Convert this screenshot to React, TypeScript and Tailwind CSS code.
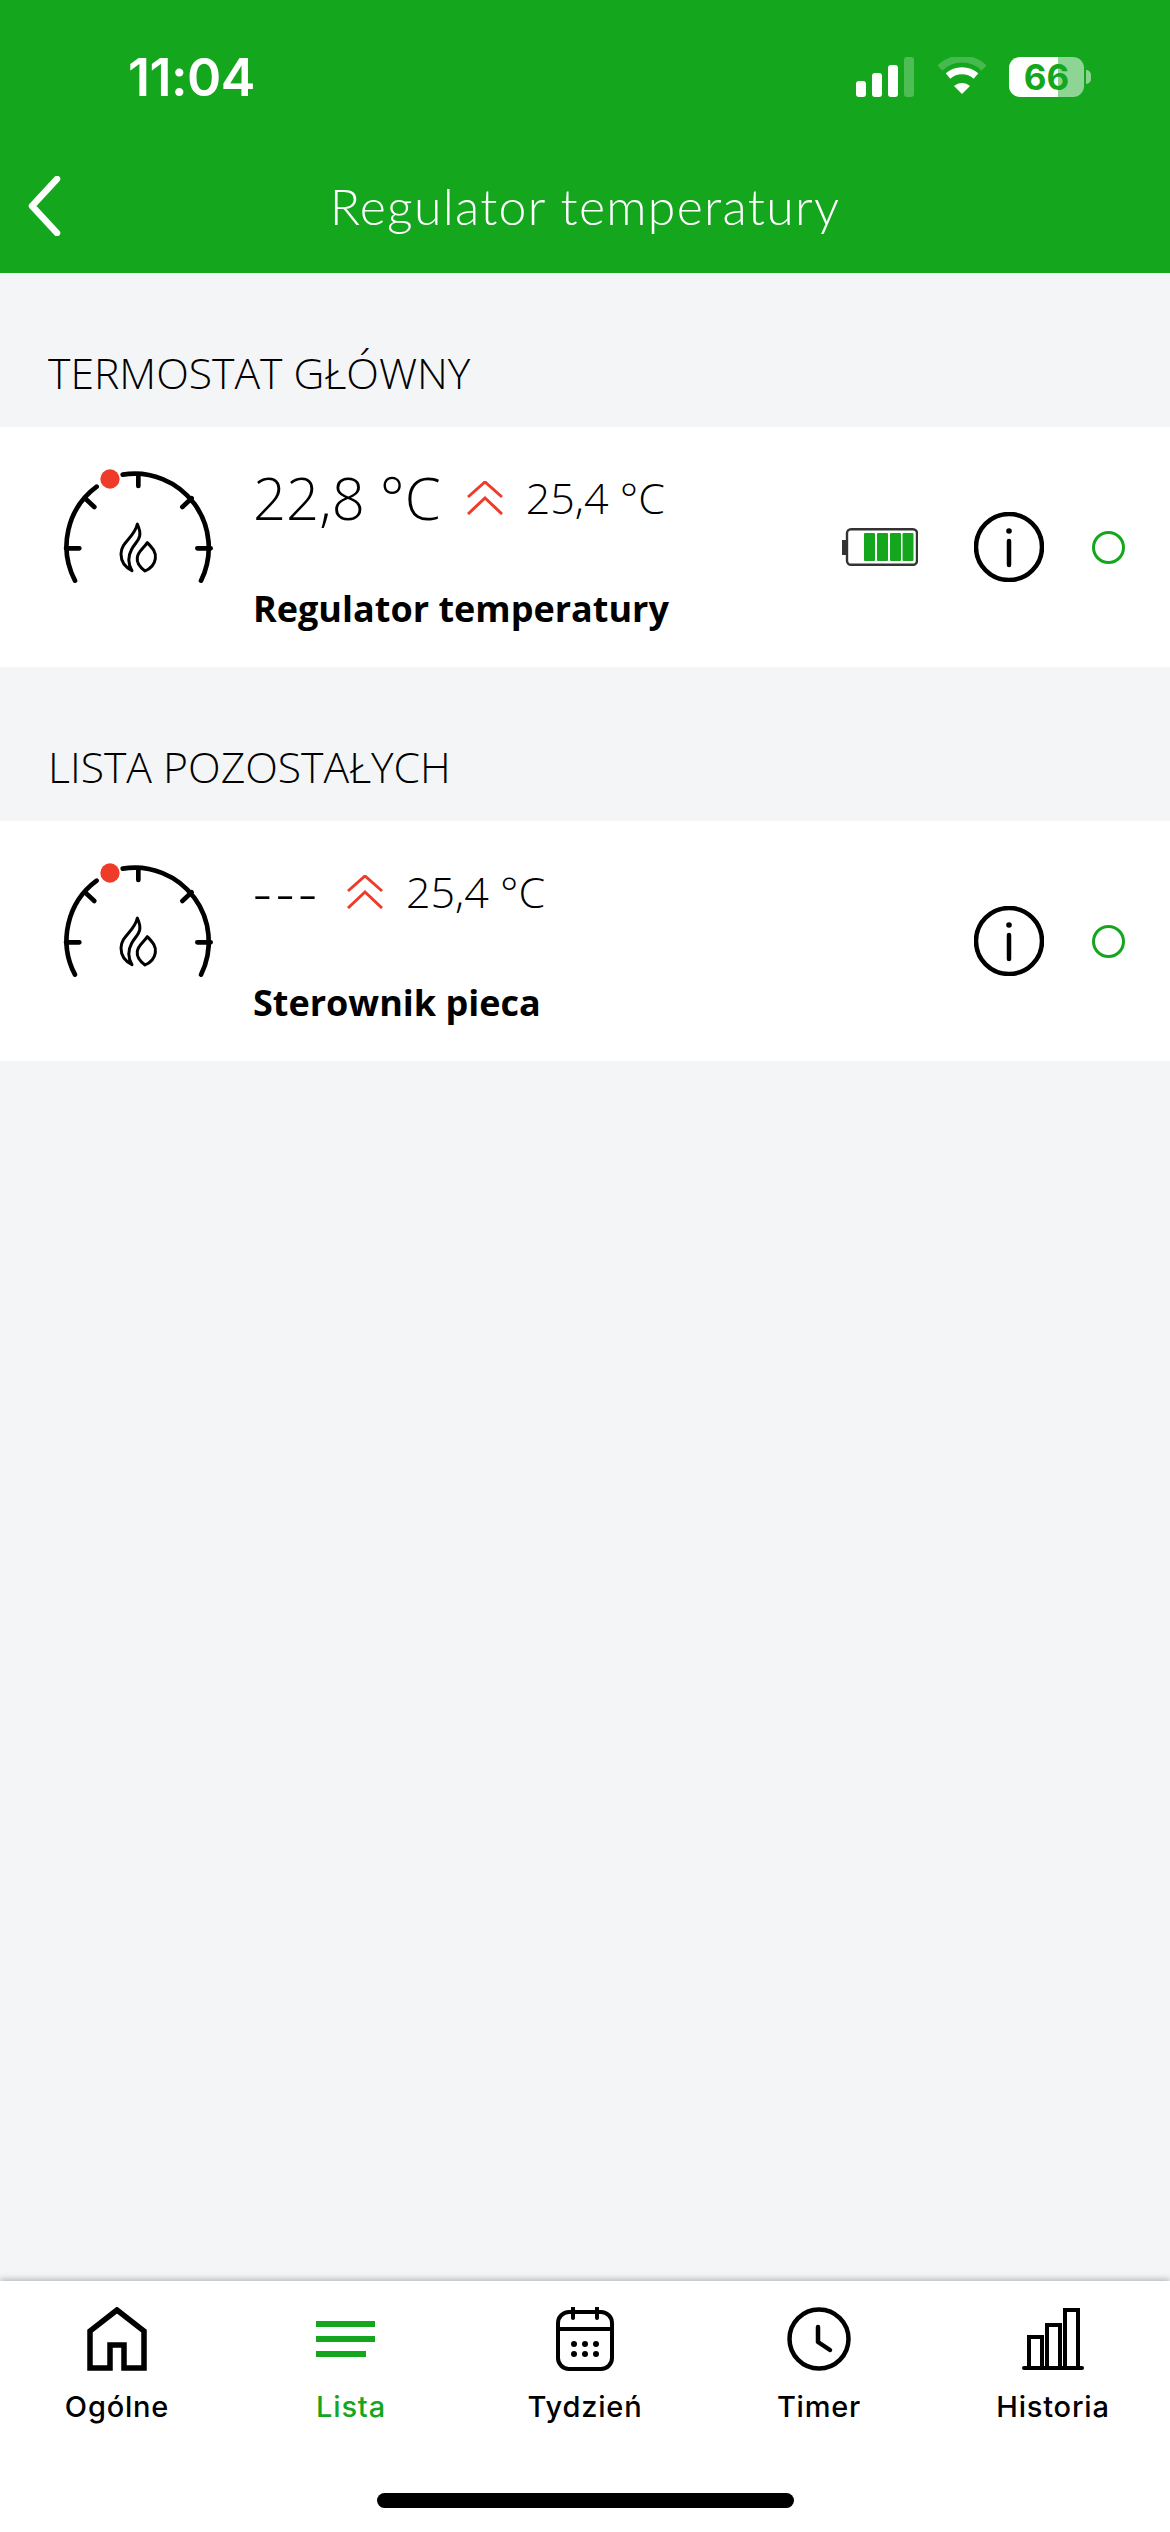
import React from "react";

const Gauge = () => (
  <svg viewBox="0 0 570 450" className="w-[190px] h-[150px] shrink-0" fill="none" stroke="#000" strokeLinecap="round" strokeLinejoin="round">
    <g strokeWidth="14">
      <path d="M105 392 A222 222 0 0 1 170 110" />
      <path d="M248 74 A222 222 0 0 1 483 392" />
      <path d="M295 72V108M78 295H118M512 295H472M135 145L163 171M455 145L427 171" />
    </g>
    <g strokeWidth="9">
      <path d="M292 222C284 262 243 276 243 312C243 338 260 354 276 362C264 342 262 322 275 298C288 272 312 266 292 222Z" />
      <path d="M322 278C338 295 349 306 346 326C343 346 326 358 315 363C300 352 289 340 292 322C294 305 310 296 322 278Z" />
    </g>
    <circle cx="210" cy="87" r="29" fill="#ee3b2a" stroke="none" />
  </svg>
);

const Chevrons = () => (
  <svg viewBox="0 0 36 34" className="w-[36px] h-[34px] shrink-0" fill="none" stroke="#ee3b2a" strokeWidth="3">
    <path d="M1 16L18 1L35 16M1 33L18 17L35 33" />
  </svg>
);

const Info = () => (
  <svg viewBox="0 0 70 70" className="w-[70px] h-[70px] shrink-0" fill="none" stroke="#000">
    <circle cx="35" cy="35" r="33" strokeWidth="4.5" />
    <path d="M35 29V53" strokeWidth="4.5" strokeLinecap="round" />
    <circle cx="35" cy="19" r="2.8" fill="#000" stroke="none" />
  </svg>
);

const Battery = () => (
  <svg viewBox="0 0 76 38" className="w-[76px] h-[38px] shrink-0">
    <rect x="0" y="12" width="5" height="15" fill="#333" />
    <rect x="5" y="1.2" width="70" height="35.5" rx="4" fill="#fff" stroke="#333" strokeWidth="2.4" />
    <rect x="22" y="5" width="11" height="28" rx="1" fill="#14a71e" />
    <rect x="35" y="5" width="11" height="28" rx="1" fill="#14a71e" />
    <rect x="48" y="5" width="11" height="28" rx="1" fill="#14a71e" />
    <rect x="60.5" y="5" width="11" height="28" rx="1" fill="#14a71e" />
  </svg>
);

const Row = ({ value, title, battery, dashes }: { value: string; title: string; battery?: boolean; dashes?: boolean }) => (
  <div className="flex h-[240px] bg-white">
    <div className="ml-[40px] mt-[23px]">
      <Gauge />
    </div>
    <div className="ml-[23px] flex flex-col font-['Open_Sans',sans-serif] text-black">
      <div className="mt-[36px] flex h-[70px] items-center gap-[26px]">
        <span className={`text-[58px] leading-[70px] font-light ${dashes ? "tracking-[4px]" : ""}`}>{value}</span>
        <Chevrons />
        <span className="-ml-[3px] text-[43px] leading-[70px] font-[350]">25,4 °C</span>
      </div>
      <div className="mt-[51px] text-[36px] leading-[50px] font-bold">{title}</div>
    </div>
    <div className="ml-auto flex items-center pr-[45px]">
      {battery && (
        <div className="mr-[56px]">
          <Battery />
        </div>
      )}
      <Info />
      <div className="ml-[48px] h-[33px] w-[33px] rounded-full border-[3px] border-[#14a71e]" />
    </div>
  </div>
);

const SectionLabel = ({ text }: { text: string }) => (
  <div className="px-[48px] pt-[71px] pb-[25px] font-['Open_Sans',sans-serif] text-[42.7px] leading-[58px] font-[350] text-black">{text}</div>
);

const Tab = ({ label, icon, active }: { label: string; icon: React.ReactNode; active?: boolean }) => (
  <div className="flex flex-col items-center">
    <div className="flex h-[64px] items-center justify-center">{icon}</div>
    <div className={`mt-[18px] font-['Inter',sans-serif] text-[29px] leading-[36px] font-medium tracking-[0.8px] ${active ? "text-[#14a71e]" : "text-black"}`}>{label}</div>
  </div>
);

export default function App() {
  return (
    <div className="flex h-[2532px] w-[1170px] flex-col overflow-hidden bg-[#f4f5f7]">
      <header className="h-[273px] shrink-0 bg-[#14a71e] text-white">
        <div className="flex h-[176px] items-start pl-[128px] pr-[79px] pt-[40px]">
          <span className="font-['Inter',sans-serif] text-[52px] leading-[76px] font-semibold tracking-[-0.5px]">11:04</span>
          <div className="ml-auto flex items-center pt-[17px]">
            <svg viewBox="0 0 60 40" className="h-[40px] w-[60px]" fill="#fff">
              <rect x="0" y="24" width="10" height="16" rx="3" />
              <rect x="16" y="16" width="10" height="24" rx="3" />
              <rect x="32" y="8" width="10" height="32" rx="3" />
              <rect x="48" y="0" width="10" height="40" rx="3" opacity="0.25" />
            </svg>
            <svg viewBox="0 0 50 40" className="ml-[21px] h-[40px] w-[50px]" fill="none" stroke="#fff" strokeWidth="7">
              <path d="M3 11C15 -1 35 -1 47 11" opacity="0.22" />
              <path d="M11 19C19 12 31 12 39 19" />
              <path d="M17 29L25 37L33 29C28 25 22 25 17 29Z" fill="#fff" stroke="none" />
            </svg>
            <div className="ml-[22px] flex h-[40px] w-[75px] items-center justify-center rounded-[11px] bg-[linear-gradient(to_right,#ffffff_66%,#8ed494_66%)] font-['Inter',sans-serif] text-[35px] leading-[40px] font-bold text-[#14a71e]">66</div>
            <div className="ml-[2px] h-[14px] w-[5px] rounded-r-full bg-white/50" />
          </div>
        </div>
        <div className="relative flex h-[60px] items-center justify-center">
          <svg viewBox="0 0 34 60" className="absolute left-[27px] top-0 h-[60px] w-[34px]" fill="none" stroke="#fff" strokeWidth="6.5" strokeLinecap="round" strokeLinejoin="round">
            <path d="M30 3L5 30L30 57" />
          </svg>
          <span className="font-['Lato',sans-serif] text-[50px] leading-[60px] font-light tracking-[1.3px]">Regulator temperatury</span>
        </div>
      </header>

      <SectionLabel text="TERMOSTAT GŁÓWNY" />
      <Row value="22,8 °C" title="Regulator temperatury" battery />
      <SectionLabel text="LISTA POZOSTAŁYCH" />
      <Row value="---" title="Sterownik pieca" dashes />

      <div className="flex-1" />

      <nav className="relative h-[251px] shrink-0 bg-white pt-[26px] shadow-[0_-2px_6px_rgba(0,0,0,0.25)]">
        <div className="grid grid-cols-5">
          <Tab
            label="Ogólne"
            icon={
              <svg viewBox="0 0 60 64" className="h-[64px] w-[60px]" fill="none" stroke="#000" strokeWidth="5.5">
                <path d="M30 3L3 24V61H23V38H37V61H57V24Z" />
              </svg>
            }
          />
          <Tab
            label="Lista"
            active
            icon={
              <div className="flex -translate-x-[6px] flex-col items-start gap-[9px]">
                <div className="h-[6px] w-[59px] bg-[#14a71e]" />
                <div className="h-[6px] w-[59px] bg-[#14a71e]" />
                <div className="h-[6px] w-[50px] bg-[#14a71e]" />
              </div>
            }
          />
          <Tab
            label="Tydzień"
            icon={
              <svg viewBox="0 0 58 64" className="h-[64px] w-[58px]" fill="none" stroke="#000" strokeWidth="4" strokeLinecap="round">
                <rect x="2" y="5" width="54" height="57" rx="11" />
                <path d="M2 22H56M17 1V11M41 1V11" />
                <g fill="#000" stroke="none">
                  <circle cx="18" cy="37" r="3" />
                  <circle cx="29" cy="37" r="3" />
                  <circle cx="40" cy="37" r="3" />
                  <circle cx="18" cy="47" r="3" />
                  <circle cx="29" cy="47" r="3" />
                  <circle cx="40" cy="47" r="3" />
                </g>
              </svg>
            }
          />
          <Tab
            label="Timer"
            icon={
              <svg viewBox="0 0 64 64" className="h-[64px] w-[64px]" fill="none" stroke="#000" strokeWidth="4.5" strokeLinecap="round" strokeLinejoin="round">
                <circle cx="32" cy="32" r="29.5" />
                <path d="M31 20V35L43 43" />
              </svg>
            }
          />
          <Tab
            label="Historia"
            icon={
              <svg viewBox="0 0 62 64" className="h-[64px] w-[62px]" fill="none" stroke="#000" strokeWidth="4" strokeLinecap="round">
                <path d="M2 61H60" />
                <rect x="7" y="30" width="13" height="31" />
                <rect x="25" y="18" width="13" height="43" />
                <rect x="43" y="3" width="13" height="58" />
              </svg>
            }
          />
        </div>
        <div className="absolute bottom-[24px] left-[377px] h-[15px] w-[417px] rounded-full bg-black" />
      </nav>
    </div>
  );
}
